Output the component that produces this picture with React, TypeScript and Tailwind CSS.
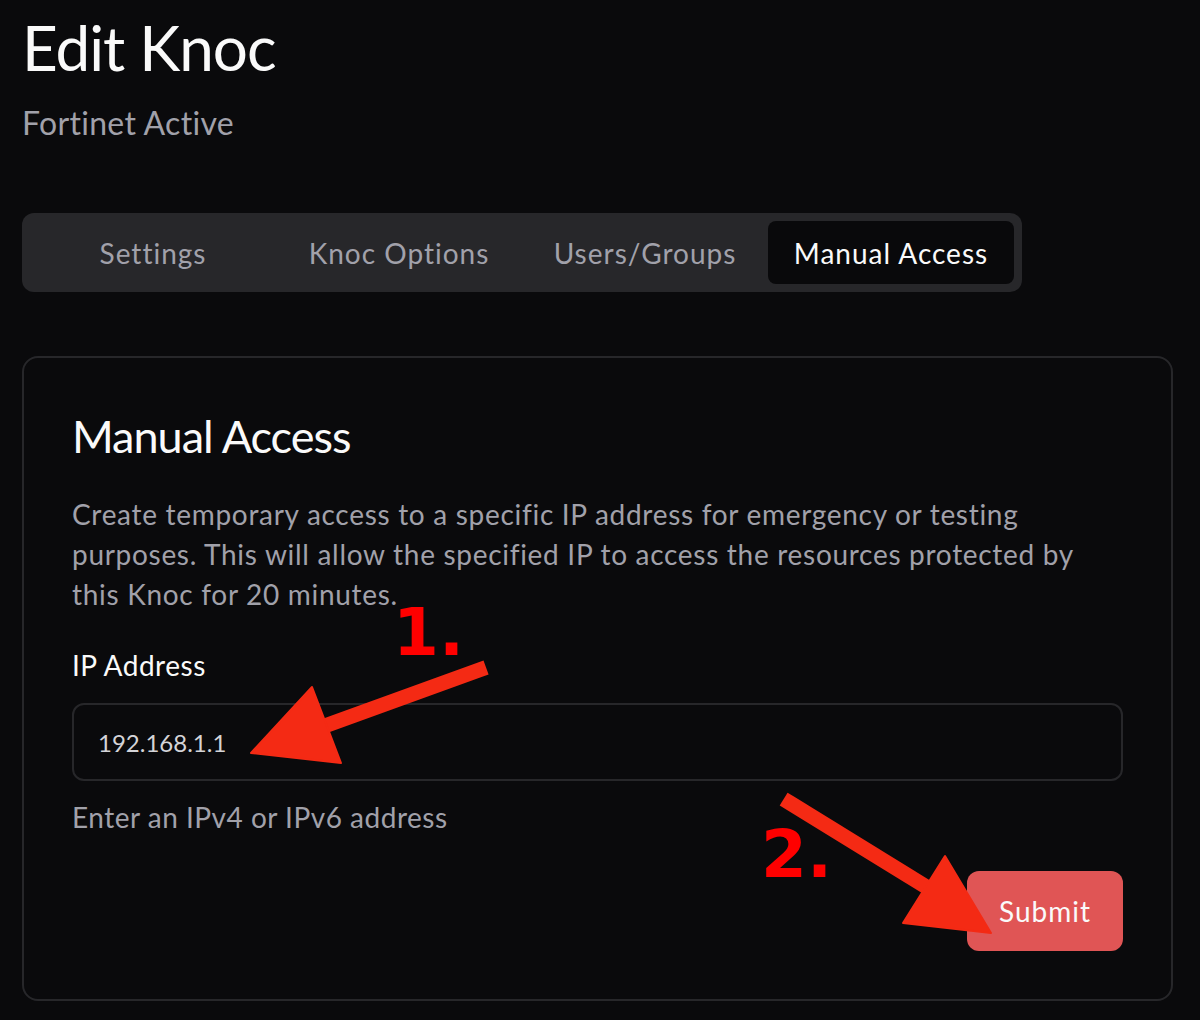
import { useState } from 'react'

const tabs = ['Settings', 'Knoc Options', 'Users/Groups', 'Manual Access']

function Annotations() {
  return (
    <div className="pointer-events-none absolute inset-0">
      <span className="absolute left-[393px] top-[600px] font-['DejaVu_Sans',sans-serif] text-[66px] font-bold leading-none text-[#ff0000]">
        1.
      </span>
      <span className="absolute left-[761px] top-[822px] font-['DejaVu_Sans',sans-serif] text-[66px] font-bold leading-none text-[#ff0000]">
        2.
      </span>
      <svg className="absolute inset-0" width="1200" height="1020" viewBox="0 0 1200 1020">
        <g fill="#f42a14" stroke="#f42a14" strokeLinejoin="round">
          <line x1="479" y1="670" x2="322" y2="727" strokeWidth="15" strokeLinecap="square" />
          <polygon points="251,753 312,687 341,763" strokeWidth="2" />
          <line x1="790" y1="803" x2="928" y2="888" strokeWidth="15" strokeLinecap="square" />
          <polygon points="991,933 945,856 903,923" strokeWidth="2" />
        </g>
      </svg>
    </div>
  )
}

export default function App() {
  const [active, setActive] = useState('Manual Access')
  const [ip, setIp] = useState('192.168.1.1')

  return (
    <div className="relative min-h-screen bg-[#0a0a0c] px-[22px] pt-[9px] font-['Lato',sans-serif] text-white">
      {/* Header */}
      <h1 className="text-[62px] leading-[76px] font-normal tracking-[-1px] text-[#fafafa]">Edit Knoc</h1>
      <p className="mt-[16px] text-[32px] leading-[44px] tracking-[0.3px] text-[#a1a1aa]">Fortinet Active</p>

      {/* Tabs */}
      <div className="mt-[68px] grid w-[1000px] grid-cols-4 rounded-[12px] bg-[#27272a] p-[8px]">
        {tabs.map(t => (
          <button
            key={t}
            onClick={() => setActive(t)}
            className={`h-[63px] rounded-[8px] text-[28px] tracking-[1px] ${
              active === t ? 'bg-[#09090b] text-[#fafafa]' : 'text-[#a1a1aa]'
            }`}
          >
            {t}
          </button>
        ))}
      </div>

      {/* Card */}
      <div className="mt-[64px] mr-[5px] rounded-[16px] border-2 border-[#27272a] px-[48px] pt-[48px] pb-[48px]">
        <h2 className="text-[45px] leading-[60px] tracking-[-1px] text-[#fafafa]">Manual Access</h2>
        <p className="mt-[28px] text-[28px] leading-[40px] tracking-[0.7px] text-[#a1a1aa]">
          Create temporary access to a specific IP address for emergency or testing
          <br />
          purposes. This will allow the specified IP to access the resources protected by
          <br />
          this Knoc for 20 minutes.
        </p>

        <label className="mt-[31px] block text-[28px] leading-[40px] tracking-[0.5px] text-[#fafafa]">IP Address</label>
        <input
          value={ip}
          onChange={e => setIp(e.target.value)}
          className="mt-[18px] block h-[78px] w-full rounded-[12px] border-2 border-[#27272a] bg-transparent px-[24px] text-[24px] text-[#d4d4d8] outline-none"
        />
        <p className="mt-[16px] text-[28px] leading-[40px] tracking-[0.5px] text-[#a1a1aa]">Enter an IPv4 or IPv6 address</p>

        <div className="mt-[34px] flex justify-end">
          <button className="h-[80px] w-[156px] rounded-[12px] bg-[#e05555] text-[28px] tracking-[1px] text-[#fafafa]">
            Submit
          </button>
        </div>
      </div>

      <Annotations />
    </div>
  )
}
